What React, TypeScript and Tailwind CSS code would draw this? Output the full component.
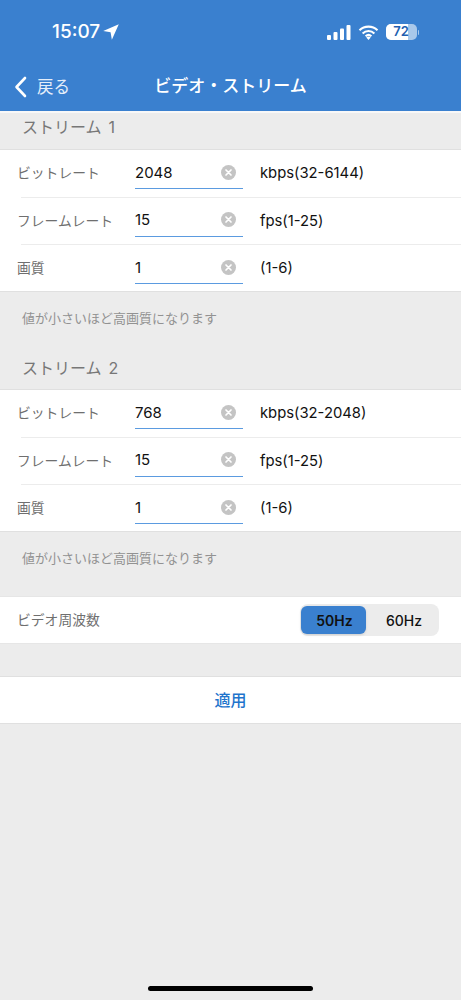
import React from "react";

const font = { fontFamily: '"Inter","Noto Sans CJK JP",sans-serif' };

function Clear() {
  return (
    <svg width="15" height="15" viewBox="0 0 15 15" className="shrink-0">
      <circle cx="7.5" cy="7.5" r="7.5" fill="#c4c4c4" />
      <path d="M5 5l5 5M10 5l-5 5" stroke="#fff" strokeWidth="1.7" strokeLinecap="round" />
    </svg>
  );
}

function Row({ label, value, unit, last }: { label: string; value: string; unit: string; last?: boolean }) {
  return (
    <div className={`flex pl-[17px] relative ${last ? "h-[46px]" : "h-[47.5px]"}`}>
      <div className="w-[118px] pt-[12px] text-[13.8px] leading-[22px] text-[#6f6f6f] whitespace-nowrap">{label}</div>
      <div className="w-[108px] h-[39px] border-b-[1.5px] border-[#5b9be0] flex items-center justify-between pr-[7px] pt-[8px]">
        <span className="text-[15px] text-[#111]">{value}</span>
        <span className="-mt-[2px]"><Clear /></span>
      </div>
      <div className="ml-[17px] pt-[12px] text-[14.8px] leading-[22px] text-[#111]">{unit}</div>
      {!last && <div className="absolute left-[21px] right-0 bottom-0 h-[1px] bg-[#ececec]" />}
    </div>
  );
}

function Stream({ u }: { u: string }) {
  return (
    <div className="bg-white border-y border-[#e0e0e0]">
      <Row label="ビットレート" value={u === "6144" ? "2048" : "768"} unit={`kbps(32-${u})`} />
      <Row label="フレームレート" value="15" unit="fps(1-25)" />
      <Row label="画質" value="1" unit="(1-6)" last />
    </div>
  );
}

function Note() {
  return <div className="h-[57px] pl-[22px] pt-[16px] text-[13px] leading-[20px] text-[#929292]">値が小さいほど高画質になります</div>;
}

function Title({ n, cls }: { n: string; cls: string }) {
  return (
    <div className={`pl-[22px] text-[16px] leading-[24px] text-[#777] shrink-0 flex ${cls}`}>
      <span>ストリーム</span>
      <span className="ml-[7px]">{n}</span>
    </div>
  );
}

export default function App() {
  return (
    <div className="w-[461px] h-[1000px] bg-[#ececec] flex flex-col overflow-hidden relative" style={font}>
      <div className="h-[111px] bg-[#3a80cf] text-white shrink-0 flex flex-col">
        <div className="h-[68px] pl-[52px] pr-[42px] pt-[21px] flex items-start justify-between">
          <div className="flex items-center gap-[3px]">
            <span className="text-[19px] leading-[22px] font-medium">15:07</span>
            <svg width="16" height="16" viewBox="0 0 15 15">
              <path d="M14.8 0.2L0.2 6.6l6.9 1.2 1.2 7z" fill="#fff" />
            </svg>
          </div>
          <div className="flex items-center gap-[7px] h-[22px]">
            <svg width="24" height="15" viewBox="0 0 24 15">
              <rect x="0" y="10" width="4" height="5" rx="1" fill="#fff" />
              <rect x="6.5" y="7" width="4" height="8" rx="1" fill="#fff" />
              <rect x="13" y="3.5" width="4" height="11.5" rx="1" fill="#fff" />
              <rect x="19.5" y="0" width="4" height="15" rx="1" fill="#fff" />
            </svg>
            <svg width="21" height="15" viewBox="0 0 21 15">
              <path d="M1.5 5.2a13 13 0 0 1 18 0M4.6 8.4a8.6 8.6 0 0 1 11.8 0M7.6 11.2a4.3 4.3 0 0 1 5.8 0" fill="none" stroke="#fff" strokeWidth="2.1" />
              <path d="M10.5 15l-2.2-2.4a3.2 3.2 0 0 1 4.4 0z" fill="#fff" />
            </svg>
            <div className="flex items-center gap-[1px]">
              <div className="relative w-[31px] h-[16px] rounded-[5px] bg-[#a9c8ea] overflow-hidden">
                <div className="w-[22px] h-full bg-white" />
                <span className="absolute inset-0 flex items-center justify-center text-[13px] font-semibold text-[#1f5fb0]">72</span>
              </div>
              <div className="w-[1.5px] h-[5px] rounded-r bg-[#a9c8ea]" />
            </div>
          </div>
        </div>
        <div className="relative flex-1 flex items-center justify-center">
          <div className="absolute left-[14px] top-[7px] flex items-center gap-[10px]">
            <svg width="13" height="22" viewBox="0 0 13 22">
              <path d="M11 2L2.5 11l8.5 9" fill="none" stroke="#fff" strokeWidth="2.6" strokeLinecap="round" strokeLinejoin="round" />
            </svg>
            <span className="text-[16.5px] text-[#e4eefa]">戻る</span>
          </div>
          <span className="text-[17px] font-medium -mt-[5px]">ビデオ・ストリーム</span>
        </div>
      </div>
      <div className="h-[2px] bg-[#f8f8f8] shrink-0" />
      <Title n="1" cls="h-[36px] pt-[2px]" />
      <Stream u="6144" />
      <Note />
      <Title n="2" cls="h-[40px] pt-[7px]" />
      <Stream u="2048" />
      <div className="h-[64px] shrink-0"><Note /></div>
      <div className="h-[48px] bg-white border-y border-[#e6e6e6] flex items-center justify-between pl-[17px] pr-[22px] shrink-0">
        <span className="text-[13.8px] text-[#6f6f6f]">ビデオ周波数</span>
        <div className="w-[139px] h-[32px] rounded-[8px] bg-[#ececec] flex items-center p-[1px]">
          <div className="w-[65px] h-[28px] rounded-[6px] bg-[#3a80cf] shadow-sm flex items-center justify-center pl-[2px] text-[14px] font-semibold text-[#111]">50Hz</div>
          <div className="flex-1 text-center pl-[4px] text-[14px] font-medium text-[#111]">60Hz</div>
        </div>
      </div>
      <div className="h-[32px] shrink-0" />
      <div className="h-[48px] bg-white border-y border-[#e0e0e0] flex items-center justify-center text-[16px] font-medium text-[#1f74cc] shrink-0">適用</div>
      <div className="absolute left-[148px] top-[986px] w-[165px] h-[5px] rounded-full bg-black" />
    </div>
  );
}
